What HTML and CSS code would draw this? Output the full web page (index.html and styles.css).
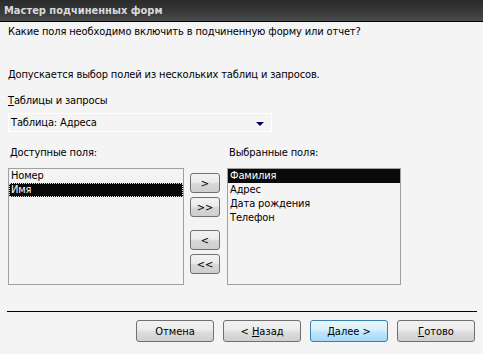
FILE: index.html
```html
<!DOCTYPE html>
<html lang="ru">
<head>
  <meta charset="UTF-8">
  <title>Мастер подчиненных форм</title>
  <link rel="stylesheet" href="styles.css">
</head>
<body>
  <div class="window">
    <div class="titlebar">Мастер подчиненных форм</div>

    <div class="content">
      <p class="question">Какие поля необходимо включить в подчиненную форму или отчет?</p>
      <p class="hint">Допускается выбор полей из нескольких таблиц и запросов.</p>
      <p class="label"><u>Т</u>аблицы и запросы</p>

      <div class="combo">
        <span>Таблица: Адреса</span>
        <span class="arrow"></span>
      </div>

      <div class="lists-head">
        <span class="head-left">Доступные поля:</span>
        <span class="head-right">Выбранные поля:</span>
      </div>

      <div class="lists">
        <ul class="list list-left">
          <li>Номер</li>
          <li class="selected focused">Имя</li>
        </ul>

        <div class="movers">
          <button class="mover">&gt;</button>
          <button class="mover">&gt;&gt;</button>
          <button class="mover gap">&lt;</button>
          <button class="mover">&lt;&lt;</button>
        </div>

        <ul class="list list-right">
          <li class="selected">Фамилия</li>
          <li>Адрес</li>
          <li>Дата рождения</li>
          <li>Телефон</li>
        </ul>
      </div>
    </div>

    <div class="separator"></div>

    <div class="footer">
      <button class="btn">Отмена</button>
      <button class="btn">&lt; <u>Н</u>азад</button>
      <button class="btn default"><u>Д</u>алее &gt;</button>
      <button class="btn"><u>Г</u>отово</button>
    </div>
  </div>
</body>
</html>
```

FILE: styles.css
```css
/* Окно мастера */
body {
  margin: 0;
  background: #f4f4f4;
  font-family: 'DejaVu Sans Condensed', 'DejaVu Sans', sans-serif;
  font-size: 11px;
  letter-spacing: -0.13px;
  color: #000;
}
.window {
  width: 483px;
  height: 354px;
  overflow: hidden;
}
.titlebar {
  height: 21px;
  line-height: 21px;
  padding-left: 4px;
  border-bottom: 1px solid #000;
  background: linear-gradient(to bottom, #2a2a2a, #3a3b3b 60%, #4a4b4b);
  color: #d8dadc;
  font-weight: bold;
  font-size: 11px;
  letter-spacing: 0;
}
.content {
  padding: 0 8px;
}
p {
  margin: 0;
  line-height: 13px;
}
.question {
  margin-top: 3px;
}
.hint {
  margin-top: 30px;
}
.label {
  margin-top: 13px;
}
.combo {
  margin-top: 6px;
  width: 253px;
  height: 17px;
  border: 1px solid #fff;
  display: flex;
  align-items: center;
  justify-content: space-between;
  padding: 0 7px 0 2px;
}
.arrow {
  width: 0;
  height: 0;
  border-left: 4px solid transparent;
  border-right: 4px solid transparent;
  border-top: 4px solid #000060;
  margin-top: 2px;
}
.lists-head {
  margin-top: 14px;
  height: 13px;
  line-height: 13px;
  display: flex;
}
.head-left {
  padding-left: 2px;
  width: 219px;
}
.lists {
  margin-top: 9px;
  display: flex;
}
.list {
  list-style: none;
  margin: 0;
  padding: 0;
  height: 115px;
  border: 1px solid #a0a0a0;
}
.list li {
  height: 14px;
  line-height: 14px;
  padding-left: 2px;
}
.list-left {
  width: 174px;
}
.list-right {
  width: 172px;
}
.list li.selected {
  background: #0a0a0a;
  color: #fff;
}
.list li.focused {
  outline: 1px dotted #ddd;
  outline-offset: -1px;
}
.movers {
  display: flex;
  flex-direction: column;
  padding: 5px 0 0;
  margin: 0 7px 0 6px;
  gap: 4px;
}
.mover {
  width: 30px;
  height: 20px;
  padding: 0;
  border: 1px solid #707070;
  border-radius: 3px;
  background: linear-gradient(to bottom, #f3f3f3, #ebebeb 45%, #d6d6d6 55%, #cfcfcf);
  font-family: inherit;
  font-size: 11px;
  color: #000;
}
.mover.gap {
  margin-top: 9px;
}
.separator {
  margin: 26px 6px 0 7px;
  height: 1px;
  background: #000;
}
.footer {
  display: flex;
  justify-content: flex-end;
  gap: 9px;
  padding: 8px 8px 0 0;
}
.btn {
  width: 78px;
  height: 22px;
  padding: 0;
  border: 1px solid #707070;
  border-radius: 3px;
  background: linear-gradient(to bottom, #f2f2f2, #ebebeb 45%, #dddddd 55%, #cfcfcf);
  font-family: inherit;
  font-size: 11px;
  color: #000;
}
.btn.default {
  border-color: #3c7fb1;
  background: linear-gradient(to bottom, #eaf6fd, #d9f0fc 45%, #bee6fd 55%, #a7d9f5);
}
```
